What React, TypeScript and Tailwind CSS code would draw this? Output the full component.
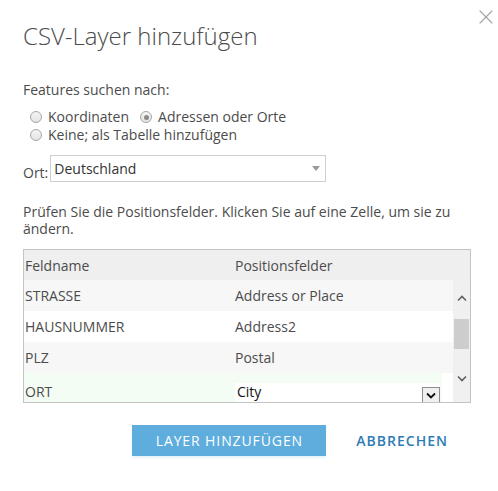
import { X } from "lucide-react";

const ROWS = [
  { name: "STRASSE", field: "Address or Place", bg: "bg-[#f7f7f7]" },
  { name: "HAUSNUMMER", field: "Address2", bg: "bg-white" },
  { name: "PLZ", field: "Postal", bg: "bg-[#f7f7f7]" },
];

function Radio({ checked = false }: { checked?: boolean }) {
  return (
    <span className="flex h-[12px] w-[12px] items-center justify-center rounded-full border border-[#a6a6a6] bg-gradient-to-b from-[#f4f4f4] to-[#e4e4e4]">
      {checked && <span className="h-[5px] w-[5px] rounded-full bg-[#8a8a8a]" />}
    </span>
  );
}

export default function App() {
  return (
    <div className="relative h-[491px] w-[498px] overflow-hidden bg-white font-['Open_Sans',sans-serif] text-[14px] text-[#4c4c4c]">
      {/* Close */}
      <button className="absolute right-0 top-[5px] text-[#a3a3a3]" aria-label="Schließen">
        <X size={24} strokeWidth={1.1} />
      </button>

      <div className="flex flex-col px-[23px] pt-[20px]">
        <h1 className="text-[24px] font-light leading-[32px] text-[#4c4c4c]">CSV-Layer hinzufügen</h1>

        {/* Features suchen nach */}
        <p className="mt-[29px] leading-[18px]">Features suchen nach:</p>
        <div className="mt-[9px] flex flex-col pl-[7px] leading-[18px]">
          <div className="flex h-[18px] items-center">
            <label className="flex items-center gap-[6px]">
              <Radio />
              Koordinaten
            </label>
            <label className="ml-[11px] flex items-center gap-[6px]">
              <Radio checked />
              Adressen oder Orte
            </label>
          </div>
          <label className="flex h-[18px] items-center gap-[6px]">
            <Radio />
            Keine; als Tabelle hinzufügen
          </label>
        </div>

        {/* Ort */}
        <div className="mt-[11px] flex items-end gap-[2px]">
          <span className="leading-[18px]">Ort:</span>
          <div className="flex h-[27px] w-[276px] items-center justify-between border border-[#cfcfcf] pl-[3px] pr-[5px]">
            <span className="text-[#333]">Deutschland</span>
            <span className="h-0 w-0 border-x-[4px] border-t-[5px] border-x-transparent border-t-[#999]" />
          </div>
        </div>

        {/* Hint */}
        <p className="mt-[21px] leading-[17px]">
          Prüfen Sie die Positionsfelder. Klicken Sie auf eine Zelle, um sie zu ändern.
        </p>

        {/* Table */}
        <div className="mt-[12px] w-[448px] border border-[#c4c4c4]">
          <div className="flex h-[30px] items-center bg-[#efefef]">
            <span className="w-[211px] pl-[1px]">Feldname</span>
            <span>Positionsfelder</span>
          </div>
          <div className="flex h-[122px] overflow-hidden">
            <div className="flex-1">
              {ROWS.map((r) => (
                <div key={r.name} className={`flex h-[31px] items-center ${r.bg}`}>
                  <span className="w-[211px] pl-[1px]">{r.name}</span>
                  <span>{r.field}</span>
                </div>
              ))}
              <div className="flex h-[31px] w-[418px] bg-[#f4fdf4]">
                <span className="w-[211px] pl-[1px] pt-[10px] leading-[18px]">ORT</span>
                <div className="mt-[10px] flex h-[24px] w-[205px] items-start justify-between bg-white pl-[2px]">
                  <span className="leading-[18px] text-[#111]">City</span>
                  <span className="mt-[4px] flex h-[18px] w-[18px] items-center justify-center border border-[#8c8c8c] bg-[#f0f0f0]">
                    <svg width="10" height="7" viewBox="0 0 10 7" className="mb-[2px]">
                      <path d="M1 1.5 L5 5.5 L9 1.5" fill="none" stroke="#111" strokeWidth="1.8" />
                    </svg>
                  </span>
                </div>
              </div>
            </div>
            {/* Scrollbar */}
            <div className="flex w-[17px] flex-col items-center bg-[#f0f0f0]">
              <svg width="10" height="7" viewBox="0 0 10 7" className="mt-[15px]">
                <path d="M1 5.5 L5 1.5 L9 5.5" fill="none" stroke="#606060" strokeWidth="1.6" />
              </svg>
              <div className="mt-[17px] h-[30px] w-[15px] bg-[#cdcdcd]" />
              <svg width="10" height="7" viewBox="0 0 10 7" className="mt-[26px]">
                <path d="M1 1.5 L5 5.5 L9 1.5" fill="none" stroke="#606060" strokeWidth="1.6" />
              </svg>
            </div>
          </div>
        </div>

        {/* Buttons */}
        <div className="mt-[22px] flex items-center justify-end gap-[30px] pr-[27px]">
          <button className="h-[31px] w-[194px] bg-[#5eaddd] text-[14px] tracking-[0.9px] text-white shadow-[0_2px_2px_rgba(94,173,221,0.15)]">
            LAYER HINZUFÜGEN
          </button>
          <button className="text-[14px] font-semibold tracking-[1px] text-[#2f7cb5]">ABBRECHEN</button>
        </div>
      </div>
    </div>
  );
}
